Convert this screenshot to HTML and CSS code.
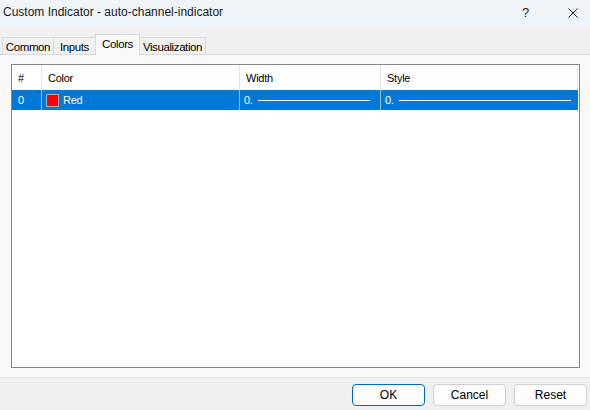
FILE: index.html
```html
<!DOCTYPE html>
<html>
<head>
<meta charset="utf-8">
<link rel="stylesheet" href="styles.css">
</head>
<body>
<div class="window">
  <div class="titlebar">
    <span class="title">Custom Indicator - auto-channel-indicator</span>
    <span class="help">?</span>
    <span class="close"><svg width="10" height="10" viewBox="0 0 10 10"><path d="M0.5 0.5 L9.5 9.5 M9.5 0.5 L0.5 9.5" stroke="#1a1a1a" stroke-width="1" fill="none"/></svg></span>
  </div>
  <div class="tabs">
    <div class="tab t-common">Common</div>
    <div class="tab t-inputs">Inputs</div>
    <div class="tab t-colors active">Colors</div>
    <div class="tab t-vis">Visualization</div>
  </div>
  <div class="panel">
    <div class="grid">
      <div class="row head">
        <div class="cell c1">#</div>
        <div class="cell c2">Color</div>
        <div class="cell c3">Width</div>
        <div class="cell c4">Style</div>
      </div>
      <div class="row sel">
        <div class="cell c1">0</div>
        <div class="cell c2"><span class="swatch"></span>Red</div>
        <div class="cell c3 val">0.<span class="line w"></span></div>
        <div class="cell c4 val">0.<span class="line s"></span></div>
      </div>
    </div>
  </div>
  <div class="footer">
    <button class="btn ok">OK</button>
    <button class="btn">Cancel</button>
    <button class="btn">Reset</button>
  </div>
</div>
</body>
</html>
```
FILE: styles.css
```css
html, body {
  margin: 0;
  padding: 0;
}
body {
  width: 590px;
  height: 410px;
  overflow: hidden;
  font-family: "Liberation Sans", Arial, sans-serif;
  color: #000;
}
.window {
  display: flex;
  flex-direction: column;
  width: 590px;
  height: 410px;
}
.titlebar {
  height: 27px;
  box-sizing: border-box;
  background: #eff4f9;
  display: flex;
  align-items: center;
  padding: 0 0 3px 3px;
}
.title {
  font-size: 12px;
  color: #1a1a1a;
  flex: 1;
}
.help {
  font-size: 13px;
  color: #1a1a1a;
  width: 10px;
  margin-right: 36px;
}
.close {
  display: flex;
  margin-right: 12px;
  padding-top: 2px;
}
.tabs {
  height: 28px;
  box-sizing: border-box;
  background: #f0f0f0;
  border-bottom: 1px solid #d9d9d9;
  display: flex;
  align-items: flex-end;
  padding-left: 2px;
}
.tab {
  box-sizing: border-box;
  height: 17px;
  border: 1px solid #d9d9d9;
  border-bottom: none;
  border-right: none;
  background: #f0f0f0;
  font-size: 11.5px;
  letter-spacing: -0.4px;
  display: flex;
  align-items: center;
  justify-content: center;
  padding-top: 1px;
}
.t-common { width: 51px; }
.t-inputs { width: 42px; }
.t-colors { width: 45px; }
.t-vis { width: 66px; border-right: 1px solid #d9d9d9; }
.tab.active {
  height: 21px;
  margin-bottom: -1px;
  background: #f9f9f9;
  border-right: 1px solid #d9d9d9;
  padding-bottom: 3px;
  padding-top: 0;
}
.tab.active + .tab { border-left: none; }
.panel {
  height: 323px;
  box-sizing: border-box;
  background: #f9f9f9;
  border-bottom: 1px solid #e3e3e3;
  padding: 9px 10px 9px 11px;
  display: flex;
}
.grid {
  flex: 1;
  background: #fff;
  border: 1px solid #86868c;
}
.row {
  display: flex;
  font-size: 11px;
  letter-spacing: -0.25px;
}
.row.head {
  height: 25px;
}
.row.sel {
  height: 20px;
  background: #0078d7;
  color: #fff;
  margin-right: 1px;
}
.cell {
  box-sizing: border-box;
  border-right: 1px solid #e5e5e5;
  display: flex;
  align-items: center;
  padding-left: 6px;
}
.row.sel .cell {
  border-right-color: #8fc2ec;
}
.c1 { width: 30px; }
.c2 { width: 198px; }
.c3 { width: 141px; }
.c4 { width: 197px; }
.cell.val { padding-left: 4px; }
.row.sel .c4 { border-right: none; }
.swatch {
  width: 13px;
  height: 13px;
  box-sizing: border-box;
  background: #ff0000;
  border: 1px solid #b0b0b0;
  margin: 0 4px 0 -2px;
}
.line {
  height: 1px;
  background: #fff;
  margin-left: 5px;
}
.line.w { width: 112px; }
.line.s { width: 172px; }
.footer {
  height: 32px;
  box-sizing: border-box;
  background: #f0f0f0;
  display: flex;
  justify-content: flex-end;
  align-items: flex-start;
  gap: 8px;
  padding: 6px 3px 0 0;
}
.btn {
  width: 73px;
  height: 22px;
  box-sizing: border-box;
  border: 1px solid #d0d0d0;
  border-radius: 4px;
  background: #fdfdfd;
  font-family: "Liberation Sans", Arial, sans-serif;
  font-size: 12px;
  color: #000;
  padding: 0;
}
.btn.ok {
  border-color: #0067c0;
}
```
